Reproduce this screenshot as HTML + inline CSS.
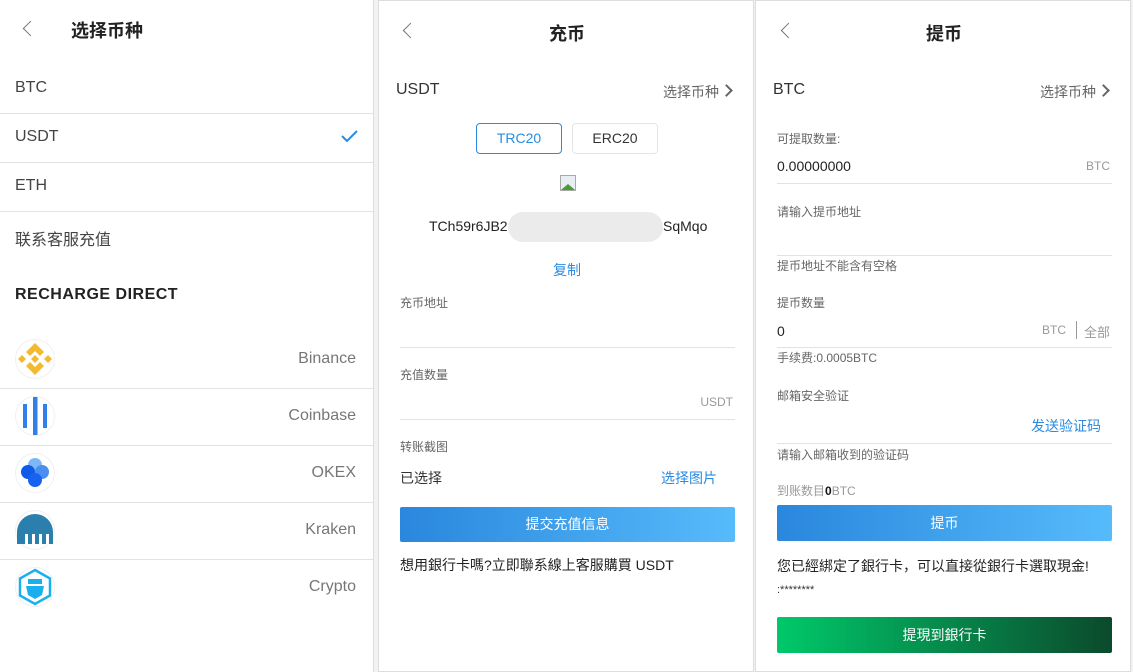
<!DOCTYPE html>
<html><head><meta charset="utf-8">
<style>
*{margin:0;padding:0;box-sizing:border-box}
body{width:1133px;height:672px;background:#f2f2f2;font-family:"Liberation Sans","Noto Sans CJK SC",sans-serif;position:relative;overflow:hidden;color:#333}
.p{position:absolute;background:#fff;top:0;height:672px}
.a{position:absolute;white-space:nowrap}
.ln{position:absolute;height:1px;background:#e2e2e2}
.back{position:absolute;width:11px;height:11px;border-left:1.5px solid #777;border-bottom:1.5px solid #777;transform:rotate(45deg)}
.chev{position:absolute;width:9px;height:9px;border-right:2px solid #666;border-top:2px solid #666;transform:rotate(45deg)}
.lbl{font-size:12px;color:#666}
.g{color:#999}
.btn{position:absolute;color:#fff;font-size:14px;text-align:center;border-radius:2px}
</style></head><body>

<!-- left panel -->
<div class="p" style="left:0;width:374px;border-right:1px solid #ddd">
<div class="back" style="left:25px;top:23px"></div>
<div class="a" style="left:71px;top:17px;font-size:18px;font-weight:bold;color:#222">选择币种</div>
<div class="a" style="left:15px;top:79px;font-size:16px;color:#444">BTC</div>
<div class="ln" style="left:0;width:374px;top:113px"></div>
<div class="a" style="left:15px;top:128px;font-size:16px;color:#444">USDT</div>
<svg class="a" style="left:341px;top:129px" width="17" height="14"><path d="M1 7 L6 12 L16 2" fill="none" stroke="#2a8be0" stroke-width="2"/></svg>
<div class="ln" style="left:0;width:374px;top:162px"></div>
<div class="a" style="left:15px;top:177px;font-size:16px;color:#444">ETH</div>
<div class="ln" style="left:0;width:374px;top:211px"></div>
<div class="a" style="left:15px;top:226px;font-size:16px;color:#444">联系客服充值</div>
<div class="a" style="left:15px;top:286px;font-size:16px;font-weight:bold;color:#222;letter-spacing:.5px">RECHARGE DIRECT</div>

<svg class="a" style="left:15px;top:339px" width="40" height="40"><circle cx="20" cy="20" r="19.5" fill="#fff" stroke="#f0f0f0"/><g fill="#f3ba2f"><path d="M20 4 L29 13 L25 17 L20 12 L15 17 L11 13Z"/><path d="M20 36 L29 27 L25 23 L20 28 L15 23 L11 27Z"/><path d="M20 16 L24 20 L20 24 L16 20Z"/><path d="M7 16 L11 20 L7 24 L3 20Z"/><path d="M33 16 L37 20 L33 24 L29 20Z"/></g></svg>
<div class="a" style="right:17px;top:350px;font-size:16px;color:#777">Binance</div>
<div class="ln" style="left:0;width:374px;top:388px"></div>
<svg class="a" style="left:15px;top:396px" width="40" height="40"><circle cx="20" cy="20" r="19.5" fill="#fff" stroke="#f0f0f0"/><g fill="#2f80ed"><rect x="8" y="8" width="4" height="24"/><rect x="18" y="1" width="4.5" height="38"/><rect x="28" y="8" width="4" height="24"/></g></svg>
<div class="a" style="right:17px;top:407px;font-size:16px;color:#777">Coinbase</div>
<div class="ln" style="left:0;width:374px;top:445px"></div>
<svg class="a" style="left:15px;top:453px" width="40" height="40"><circle cx="20" cy="20" r="19.5" fill="#fff" stroke="#f0f0f0"/><circle cx="20" cy="12" r="7" fill="#7db7f5"/><circle cx="27" cy="19" r="7" fill="#4a8ef0"/><circle cx="13" cy="19" r="7" fill="#0f5ae8"/><circle cx="20" cy="27" r="7" fill="#1763f0"/></svg>
<div class="a" style="right:17px;top:464px;font-size:16px;color:#777">OKEX</div>
<div class="ln" style="left:0;width:374px;top:502px"></div>
<svg class="a" style="left:15px;top:510px" width="40" height="40"><circle cx="20" cy="20" r="19.5" fill="#fff" stroke="#f0f0f0"/><path d="M2 34 V22 A18 18 0 0 1 38 22 V34 H34 V24 H31 V34 H27 V24 H24 V34 H20 V24 H17 V34 H13 V24 H10 V34 H6 V24 H6 V34Z" fill="#2a7fad"/></svg>
<div class="a" style="right:17px;top:521px;font-size:16px;color:#777">Kraken</div>
<div class="ln" style="left:0;width:374px;top:559px"></div>
<svg class="a" style="left:15px;top:567px" width="40" height="40"><circle cx="20" cy="20" r="19.5" fill="#fff" stroke="#f0f0f0"/><path d="M20 3 L35 11.5 V28.5 L20 37 L5 28.5 V11.5Z" fill="none" stroke="#1ab0f0" stroke-width="2.5"/><path d="M13 12 H27 V17 H13Z M11 19 H29 L27 28 L20 32 L13 28Z" fill="#1ab0f0"/></svg>
<div class="a" style="right:17px;top:578px;font-size:16px;color:#777">Crypto</div>
</div>

<!-- middle panel -->
<div class="p" style="left:378px;width:376px;border:1px solid #ddd">
<div class="back" style="left:26px;top:24px"></div>
<div class="a" style="left:0;width:376px;text-align:center;top:19px;font-size:18px;font-weight:bold;color:#222">充币</div>
<div class="a" style="left:17px;top:80px;font-size:16px;color:#333">USDT</div>
<div class="a" style="right:34px;top:81px;font-size:14px;color:#666">选择币种</div>
<div class="chev" style="right:22px;top:85px"></div>
<div class="a" style="left:97px;top:122px;width:86px;height:31px;border:1px solid #2a8be0;border-radius:4px;color:#2a8be0;font-size:14px;text-align:center;line-height:29px">TRC20</div>
<div class="a" style="left:193px;top:122px;width:86px;height:31px;border:1px solid #e5e5e5;border-radius:4px;color:#333;font-size:14px;text-align:center;line-height:29px">ERC20</div>
<svg class="a" style="left:181px;top:174px" width="16" height="16"><rect x="0.5" y="0.5" width="15" height="15" fill="#e8eef3" stroke="#aaa"/><path d="M1 15 L8 9 L15 15Z" fill="#4a9a3a"/></svg>
<div class="a" style="left:50px;top:217px;font-size:14px;color:#222">TCh59r6JB2</div>
<div class="a" style="left:129px;top:211px;width:155px;height:30px;border-radius:15px;background:#ebebeb"></div>
<div class="a" style="left:284px;top:217px;font-size:14px;color:#222">SqMqo</div>
<div class="a" style="left:0;width:376px;text-align:center;top:259px;font-size:14px;color:#2a8be0">复制</div>
<div class="a lbl" style="left:21px;top:293px">充币地址</div>
<div class="ln" style="left:21px;width:335px;top:346px"></div>
<div class="a lbl" style="left:21px;top:365px">充值数量</div>
<div class="a g" style="right:20px;top:394px;font-size:12px">USDT</div>
<div class="ln" style="left:21px;width:335px;top:418px"></div>
<div class="a lbl" style="left:21px;top:437px">转账截图</div>
<div class="a" style="left:21px;top:467px;font-size:14px;color:#333">已选择</div>
<div class="a" style="right:36px;top:467px;font-size:14px;color:#2a8be0">选择图片</div>
<div class="btn" style="left:21px;top:506px;width:335px;height:35px;line-height:35px;background:linear-gradient(90deg,#2a87dd,#56bbfb)">提交充值信息</div>
<div class="a" style="left:21px;top:554px;font-size:14px;color:#222">想用銀行卡嗎?立即聯系線上客服購買 USDT</div>
</div>

<!-- right panel -->
<div class="p" style="left:755px;width:376px;border:1px solid #ddd">
<div class="back" style="left:27px;top:24px"></div>
<div class="a" style="left:0;width:376px;text-align:center;top:19px;font-size:18px;font-weight:bold;color:#222">提币</div>
<div class="a" style="left:17px;top:80px;font-size:16px;color:#333">BTC</div>
<div class="a" style="right:34px;top:81px;font-size:14px;color:#666">选择币种</div>
<div class="chev" style="right:22px;top:85px"></div>
<div class="a lbl" style="left:21px;top:129px">可提取数量:</div>
<div class="a" style="left:21px;top:157px;font-size:14px;color:#222">0.00000000</div>
<div class="a g" style="right:20px;top:158px;font-size:12px">BTC</div>
<div class="ln" style="left:21px;width:335px;top:182px"></div>
<div class="a lbl" style="left:21px;top:202px">请输入提币地址</div>
<div class="ln" style="left:21px;width:335px;top:254px"></div>
<div class="a lbl" style="left:21px;top:256px">提币地址不能含有空格</div>
<div class="a lbl" style="left:21px;top:293px">提币数量</div>
<div class="a" style="left:21px;top:322px;font-size:14px;color:#222">0</div>
<div class="a g" style="right:64px;top:322px;font-size:12px">BTC</div>
<div class="a" style="left:320px;top:320px;width:1px;height:18px;background:#999"></div>
<div class="a g" style="right:20px;top:321px;font-size:13px">全部</div>
<div class="ln" style="left:21px;width:335px;top:346px"></div>
<div class="a lbl" style="left:21px;top:348px">手续费:0.0005BTC</div>
<div class="a lbl" style="left:21px;top:386px">邮箱安全验证</div>
<div class="a" style="right:29px;top:415px;font-size:14px;color:#2a8be0">发送验证码</div>
<div class="ln" style="left:21px;width:335px;top:442px"></div>
<div class="a lbl" style="left:21px;top:445px">请输入邮箱收到的验证码</div>
<div class="a" style="left:21px;top:481px;font-size:12px;color:#999">到账数目<b style="color:#111">0</b>BTC</div>
<div class="btn" style="left:21px;top:504px;width:335px;height:36px;line-height:36px;background:linear-gradient(90deg,#2a87dd,#56bbfb)">提币</div>
<div class="a" style="left:21px;top:555px;font-size:14px;color:#222">您已經綁定了銀行卡，可以直接從銀行卡選取現金!</div>
<div class="a" style="left:21px;top:583px;font-size:11px;color:#333">:********</div>
<div class="btn" style="left:21px;top:616px;width:335px;height:36px;line-height:36px;background:linear-gradient(90deg,#00c96a,#0b4a2c)">提現到銀行卡</div>
</div>
</body></html>
